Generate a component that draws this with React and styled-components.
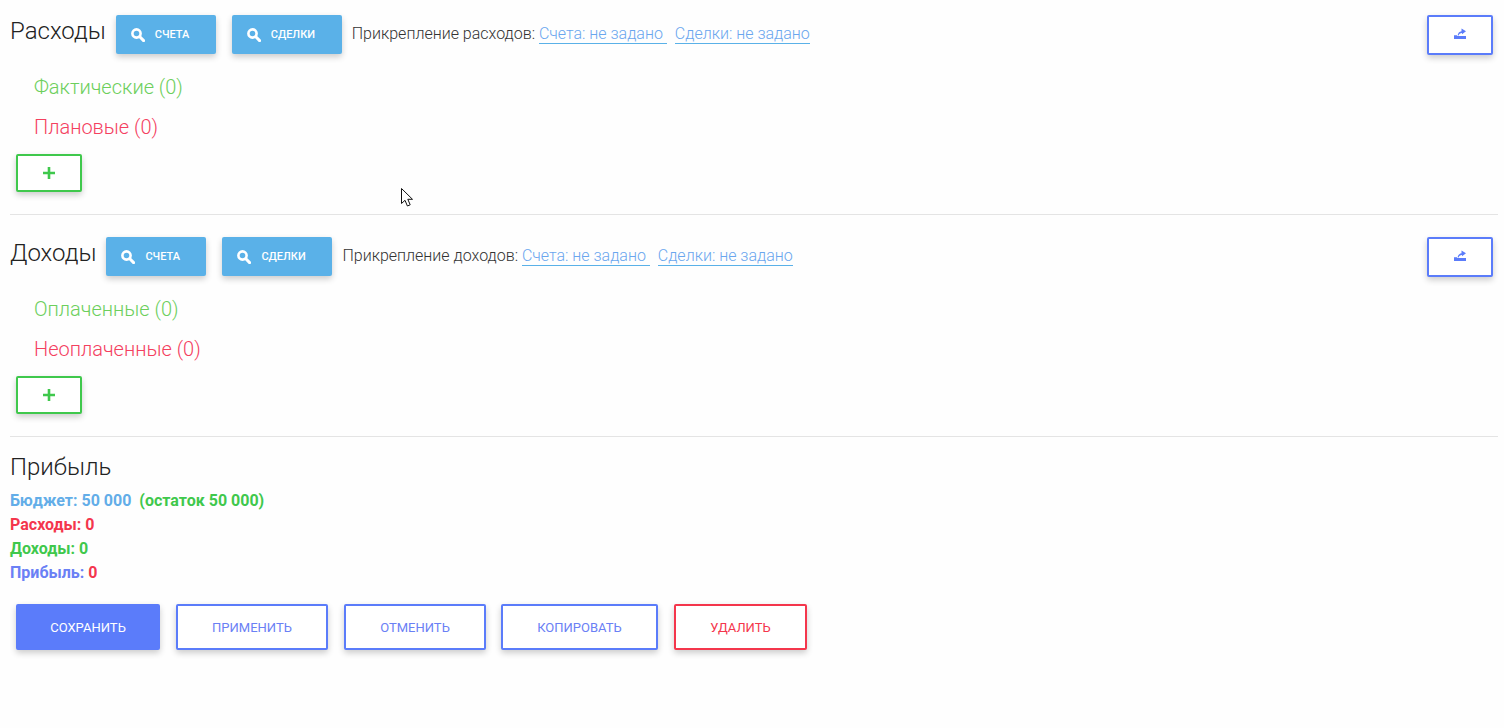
import React from "react";
import styled, { createGlobalStyle } from "styled-components";

const Global = createGlobalStyle`
  html, body { margin: 0; padding: 0; background: #fefefe; }
  body { font-family: Roboto, "Noto Sans", sans-serif; color: #333; }
`;

const blue = "#5b7cfa";
const green = "#3fc84c";
const red = "#f4364c";
const sky = "#5ab1e8";

const Page = styled.div`
  width: 1504px;
  height: 728px;
  padding: 0 6px 0 10px;
  box-sizing: border-box;
  overflow: hidden;
  position: relative;
`;

const Section = styled.section`
  height: 215px;
  margin-bottom: 7px;
  padding-top: 15px;
  box-sizing: border-box;
  border-bottom: 1px solid #e4e4e4;
`;

const Toolbar = styled.div`
  display: flex;
  align-items: flex-start;
  height: 39px;
`;

const Title = styled.h2`
  margin: 0 10px 0 0;
  font-size: 24px;
  font-weight: 300;
  line-height: 32px;
  color: #222;
`;

const SearchButton = styled.button`
  width: ${(p) => p.$w}px;
  height: 39px;
  margin-right: 16px;
  padding: 0 0 0 15px;
  border: 0;
  border-radius: 2px;
  background: ${sky};
  color: #fff;
  font: 500 11px Roboto, sans-serif;
  text-transform: uppercase;
  display: flex;
  align-items: center;
  gap: 10px;
  box-shadow: 0 3px 6px rgba(0, 0, 0, 0.2);
`;

const Attach = styled.div`
  margin-left: -6px;
  font-size: 16px;
  font-weight: 300;
  line-height: 38px;
  color: #333;
  white-space: pre;
`;

const AttachLink = styled.a`
  color: #6aa6ee;
  border-bottom: 1px solid ${sky};
  margin-right: 8px;
`;

const ShareButton = styled.button`
  margin: 0 5px 0 auto;
  width: 66px;
  height: 40px;
  box-sizing: border-box;
  border: 2px solid ${blue};
  border-radius: 2px;
  background: #fff;
  display: flex;
  align-items: center;
  justify-content: center;
  padding: 0 0 3px;
  box-shadow: 0 3px 6px rgba(0, 0, 0, 0.2);
`;

const Category = styled.div`
  margin: ${(p) => p.$mt}px 0 0 24px;
  font-size: 20px;
  font-weight: 300;
  line-height: 28px;
  color: ${(p) => p.$color};
`;

const AddButton = styled.button`
  display: flex;
  align-items: center;
  justify-content: center;
  margin: 13px 0 0 6px;
  width: 66px;
  height: 38px;
  padding: 0;
  box-sizing: border-box;
  border: 2px solid ${green};
  border-radius: 2px;
  background: #fff;
  box-shadow: 0 3px 6px rgba(0, 0, 0, 0.2);
`;

const ProfitTitle = styled.h2`
  margin: 0;
  font-size: 24px;
  font-weight: 300;
  line-height: 32px;
  color: #222;
  padding-top: 7px;
`;

const Stats = styled.div`
  margin-top: 6px;
`;

const Stat = styled.div`
  font-size: 16px;
  font-weight: 700;
  line-height: 24px;
  color: ${(p) => p.$color};
  white-space: pre;
`;

const Value = styled.span`
  color: ${(p) => p.$color};
`;

const Actions = styled.div`
  display: flex;
  gap: 16px;
  margin: 19px 0 0 6px;
`;

const ActionButton = styled.button`
  width: ${(p) => p.$w}px;
  height: 46px;
  margin-left: ${(p) => p.$shift || 0}px;
  box-sizing: border-box;
  border: 2px solid ${(p) => p.$color};
  border-radius: 2px;
  background: ${(p) => (p.$solid ? p.$color : "#fff")};
  color: ${(p) => (p.$solid ? "#fff" : p.$text || p.$color)};
  font: 400 13px Roboto, sans-serif;
  text-transform: uppercase;
  padding: 0;
  box-shadow: 0 3px 6px rgba(0, 0, 0, 0.2);
`;

const CursorMark = styled.svg`
  position: absolute;
  left: 401px;
  top: 188px;
`;

const SearchIcon = () => (
  <svg width="14" height="14" viewBox="0 0 14 14" aria-hidden="true">
    <circle cx="5.5" cy="5.5" r="4.1" fill="none" stroke="#fff" strokeWidth="2.6" />
    <path d="M8.800 8.800l3.800 3.800" stroke="#fff" strokeWidth="3" strokeLinecap="round" />
  </svg>
);

const ShareIcon = () => (
  <svg width="12" height="11" viewBox="0 0 12 11" aria-hidden="true">
    <path d="M0 7.300h3v.7h9v3H0z" fill={blue} />
    <path d="M3.600 7.500c.3-2.400 1.700-4 3.900-4.300V.5L12 3.200 8 6.300V5C6.200 5.100 5 6 4.600 7.500z" fill={blue} />
  </svg>
);

const PlusIcon = () => (
  <svg width="12" height="12" viewBox="0 0 12 12" aria-hidden="true">
    <path d="M6 0v12M0 6h12" stroke={green} strokeWidth="2.600" />
  </svg>
);

const Cursor = () => (
  <CursorMark width="14" height="20" viewBox="0 0 14 20" aria-hidden="true">
    <path d="M.5.500v15l3.500-3.200 2.400 5.700 2.800-1.200-2.400-5.500h4.700z" fill="#fff" stroke="#111" strokeWidth="1" />
  </CursorMark>
);

function Block({ title, noun, cats }) {
  return (
    <Section>
      <Toolbar>
        <Title>{title}</Title>
        <SearchButton $w={100}><SearchIcon />Счета</SearchButton>
        <SearchButton $w={110}><SearchIcon />Сделки</SearchButton>
        <Attach>
          {`Прикрепление ${noun}: `}
          <AttachLink>{"Счета: не задано "}</AttachLink>
          <AttachLink>Сделки: не задано</AttachLink>
        </Attach>
        <ShareButton><ShareIcon /></ShareButton>
      </Toolbar>
      <Category $mt={19} $color="#6ccf5c">{cats[0]} (0)</Category>
      <Category $mt={12} $color="#f4405f">{cats[1]} (0)</Category>
      <AddButton><PlusIcon /></AddButton>
    </Section>
  );
}

export default function App() {
  return (
    <Page>
      <Global />
      <Block title="Расходы" noun="расходов" cats={["Фактические", "Плановые"]} />
      <Block title="Доходы" noun="доходов" cats={["Оплаченные", "Неоплаченные"]} />
      <ProfitTitle>Прибыль</ProfitTitle>
      <Stats>
        <Stat $color="#62ade8">{"Бюджет: 50 000  "}<Value $color={green}>(остаток 50 000)</Value></Stat>
        <Stat $color={red}>Расходы: 0</Stat>
        <Stat $color={green}>Доходы: 0</Stat>
        <Stat $color="#6a80f5">Прибыль: <Value $color={red}>0</Value></Stat>
      </Stats>
      <Actions>
        <ActionButton $w={144} $color={blue} $solid>Сохранить</ActionButton>
        <ActionButton $w={152} $color={blue} $text="#6a80f5">Применить</ActionButton>
        <ActionButton $w={142} $color={blue} $text="#6a80f5">Отменить</ActionButton>
        <ActionButton $w={157} $color={blue} $text="#6a80f5" $shift={-1}>Копировать</ActionButton>
        <ActionButton $w={133} $color={red}>Удалить</ActionButton>
      </Actions>
      <Cursor />
    </Page>
  );
}
